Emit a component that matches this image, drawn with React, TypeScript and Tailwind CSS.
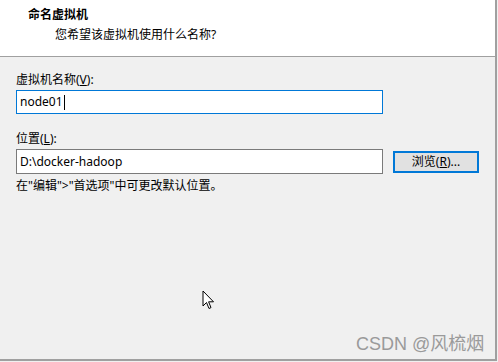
const font = { fontFamily: '"Noto Sans", "Noto Sans CJK SC", sans-serif' };

const Cursor = () => (
  <svg width="14" height="22" viewBox="0 0 14 22" className="absolute left-[202px] top-[290px]">
    <path
      d="M1 1 L1 16 L4.5 12.5 L7 18.5 L9 17.6 L6.6 11.8 L11.5 11.8 Z"
      fill="#fff"
      stroke="#000"
      strokeWidth="1"
      strokeLinejoin="miter"
    />
  </svg>
);

export default function App() {
  return (
    <div
      className="relative w-[498px] h-[362px] bg-[#f0f0f0] text-[12px] text-black overflow-hidden"
      style={font}
    >
      <div className="w-[497px] h-[361px] border-r-2 border-b-2 border-[#a0a0a0] flex flex-col">
        <div className="h-[57px] bg-white border-b border-[#a0a0a0] pt-[6px]">
          <div className="pl-[28px] font-bold leading-[17px]">命名虚拟机</div>
          <div className="pl-[55px] mt-[3px] leading-[17px]">您希望该虚拟机使用什么名称?</div>
        </div>

        <div className="pl-[16px] pt-[14px]">
          <div className="leading-[17px]">
            虚拟机名称(<span className="underline">V</span>):
          </div>
          <div className="mt-[2px] w-[367px] h-[24px] border border-[#0078d7] bg-white flex items-center px-[3px]">
            <span>node01</span>
            <span className="w-px h-[15px] bg-black ml-[1px]"></span>
          </div>

          <div className="mt-[16px] leading-[17px]">
            位置(<span className="underline">L</span>):
          </div>
          <div className="mt-[2px] flex items-center gap-[10px]">
            <div className="w-[367px] h-[25px] border border-[#7a7a7a] bg-white flex items-center px-[3px]">
              D:\docker-hadoop
            </div>
            <div className="w-[86px] h-[22px] border-2 border-[#0078d7] bg-[#e1e1e1] flex items-center justify-center">
              浏览(<span className="underline">R</span>)...
            </div>
          </div>

          <div className="mt-[3px] leading-[17px]">{'在"编辑">"首选项"中可更改默认位置。'}</div>
        </div>
      </div>

      <Cursor />

      <div
        className="absolute left-[356px] top-[333px] text-[18px] text-[#9a9a9a] leading-[22px]"
        style={{ fontFamily: '"Liberation Sans", "Noto Sans CJK SC", sans-serif' }}
      >
        CSDN @风梳烟
      </div>
    </div>
  );
}
